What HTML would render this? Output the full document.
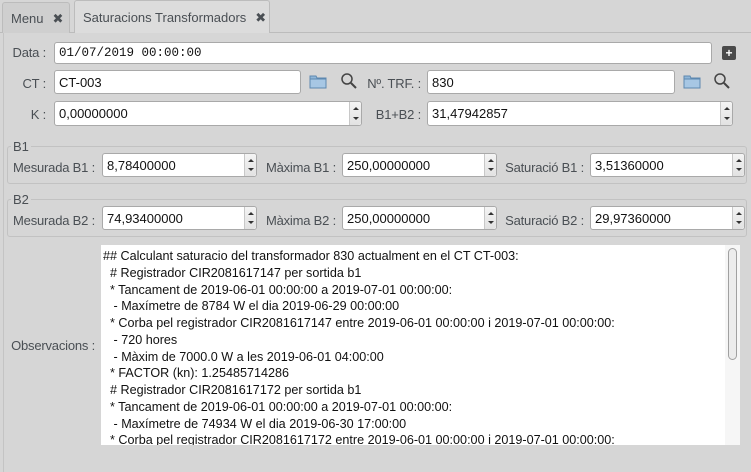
<!DOCTYPE html>
<html><head><meta charset="utf-8"><style>
*{box-sizing:border-box;margin:0;padding:0}
body{width:751px;height:472px;background:#d6d6d6;font-family:"Liberation Sans","DejaVu Sans",sans-serif;font-size:13px;color:#31363b;position:relative;overflow:hidden}
.a{position:absolute}
.tab{position:absolute;top:2px;height:31px;border:1px solid #bcbcbc;border-bottom:none;border-radius:3px 3px 0 0;padding:8px 0 0 8px;color:#4a4f54}
.x{font-weight:bold;margin-left:9px;font-size:13px}
.in{position:absolute;background:#fff;border:1px solid #a9a9a9;border-radius:3px;padding:4px 0 0 4px;color:#111;height:24px}
.sp{position:absolute;right:0;top:0;bottom:0;width:12px;border-left:1px solid #c8c8c8;background:linear-gradient(#f4f4f4,#e2e2e2);border-radius:0 3px 3px 0}
.sp:before{content:"";position:absolute;left:3px;top:5px;border:3px solid transparent;border-bottom:3px solid #333;border-top:0}
.sp:after{content:"";position:absolute;left:3px;bottom:5px;border:3px solid transparent;border-top:3px solid #333;border-bottom:0}
.lb{position:absolute;text-align:right;color:#4a4f54;letter-spacing:-0.2px}
.grp{position:absolute;border:1px solid #c2c2c2;border-radius:3px}
.gt{position:absolute;background:#d6d6d6;padding:0 2px;color:#4a4f54}
.ta{position:absolute;left:101px;top:245px;width:639px;height:200px;background:#fff;color:#111;padding:3px 0 0 2px;line-height:16.75px;font-size:12.6px;white-space:pre;overflow:hidden}
</style></head><body>
<div class="a" style="left:0;top:32px;width:751px;height:1px;background:#bcbcbc"></div>
<div class="a" style="left:3px;top:33px;width:1px;height:439px;background:#c4c4c4"></div>
<div class="tab" style="left:2px;width:68px;background:#cfcfcf">Menu<span class="x">✖</span></div>
<div class="tab" style="left:74px;top:0;height:33px;width:196px;background:#dcdcdc;padding-top:9px">Saturacions Transformadors<span class="x">✖</span></div>

<div class="lb" style="left:0;width:46px;top:45px">Data :</div>
<div class="in" style="left:54px;top:42px;width:658px;height:22px;padding-top:3px;font-family:'Liberation Mono',monospace;font-size:12.5px">01/07/2019 00:00:00</div>
<div class="a" style="left:722px;top:46px;width:14px;height:14px;background:#4a4a4a;border-radius:2px;color:#fff;font-size:12px;line-height:14px;text-align:center;font-weight:bold">+</div>

<div class="lb" style="left:0;width:46px;top:76px">CT :</div>
<div class="in" style="left:54px;top:70px;width:247px">CT-003</div>
<svg class="a" style="left:309px;top:73px" width="18" height="16"><path d="M1 3h6l1 2h9v10H1z" fill="#8fb6d8" stroke="#5d88b0"/><rect x="1" y="6" width="16" height="9" fill="#a7c7e4" stroke="#5d88b0"/></svg>
<svg class="a" style="left:340px;top:72px" width="18" height="18"><circle cx="7" cy="7" r="5" fill="none" stroke="#444" stroke-width="1.5"/><path d="M11 11l5 5" stroke="#444" stroke-width="2"/></svg>
<div class="lb" style="left:340px;width:81px;top:76px">Nº. TRF. :</div>
<div class="in" style="left:427px;top:70px;width:248px">830</div>
<svg class="a" style="left:683px;top:73px" width="18" height="16"><path d="M1 3h6l1 2h9v10H1z" fill="#8fb6d8" stroke="#5d88b0"/><rect x="1" y="6" width="16" height="9" fill="#a7c7e4" stroke="#5d88b0"/></svg>
<svg class="a" style="left:713px;top:72px" width="18" height="18"><circle cx="7" cy="7" r="5" fill="none" stroke="#444" stroke-width="1.5"/><path d="M11 11l5 5" stroke="#444" stroke-width="2"/></svg>

<div class="lb" style="left:0;width:46px;top:107px">K :</div>
<div class="in" style="left:54px;top:101px;width:308px;height:25px">0,00000000<div class="sp"></div></div>
<div class="lb" style="left:340px;width:81px;top:107px">B1+B2 :</div>
<div class="in" style="left:427px;top:101px;width:306px;height:25px">31,47942857<div class="sp"></div></div>

<div class="grp" style="left:7px;top:146px;width:740px;height:38px"></div>
<div class="gt" style="left:11px;top:139px">B1</div>
<div class="lb" style="left:0;width:95px;top:160px">Mesurada B1 :</div>
<div class="in" style="left:102px;top:153px;width:155px">8,78400000<div class="sp"></div></div>
<div class="lb" style="left:250px;width:86px;top:160px">Màxima B1 :</div>
<div class="in" style="left:342px;top:153px;width:155px">250,00000000<div class="sp"></div></div>
<div class="lb" style="left:490px;width:94px;top:160px">Saturació B1 :</div>
<div class="in" style="left:590px;top:153px;width:155px">3,51360000<div class="sp"></div></div>

<div class="grp" style="left:7px;top:199px;width:740px;height:38px"></div>
<div class="gt" style="left:11px;top:192px">B2</div>
<div class="lb" style="left:0;width:95px;top:213px">Mesurada B2 :</div>
<div class="in" style="left:102px;top:206px;width:155px">74,93400000<div class="sp"></div></div>
<div class="lb" style="left:250px;width:86px;top:213px">Màxima B2 :</div>
<div class="in" style="left:342px;top:206px;width:155px">250,00000000<div class="sp"></div></div>
<div class="lb" style="left:490px;width:94px;top:213px">Saturació B2 :</div>
<div class="in" style="left:590px;top:206px;width:155px">29,97360000<div class="sp"></div></div>

<div class="lb" style="left:0;width:95px;top:338px">Observacions :</div>
<div class="ta">## Calculant saturacio del transformador 830 actualment en el CT CT-003:
  # Registrador CIR2081617147 per sortida b1
  * Tancament de 2019-06-01 00:00:00 a 2019-07-01 00:00:00:
   - Maxímetre de 8784 W el dia 2019-06-29 00:00:00
  * Corba pel registrador CIR2081617147 entre 2019-06-01 00:00:00 i 2019-07-01 00:00:00:
   - 720 hores
   - Màxim de 7000.0 W a les 2019-06-01 04:00:00
  * FACTOR (kn): 1.25485714286
  # Registrador CIR2081617172 per sortida b1
  * Tancament de 2019-06-01 00:00:00 a 2019-07-01 00:00:00:
   - Maxímetre de 74934 W el dia 2019-06-30 17:00:00
  * Corba pel registrador CIR2081617172 entre 2019-06-01 00:00:00 i 2019-07-01 00:00:00:</div>
<div class="a" style="left:725px;top:245px;width:15px;height:200px;background:#f6f6f6"></div>
<div class="a" style="left:728px;top:248px;width:9px;height:112px;border:1px solid #a0a0a0;border-radius:5px;background:#ececec"></div>
</body></html>
